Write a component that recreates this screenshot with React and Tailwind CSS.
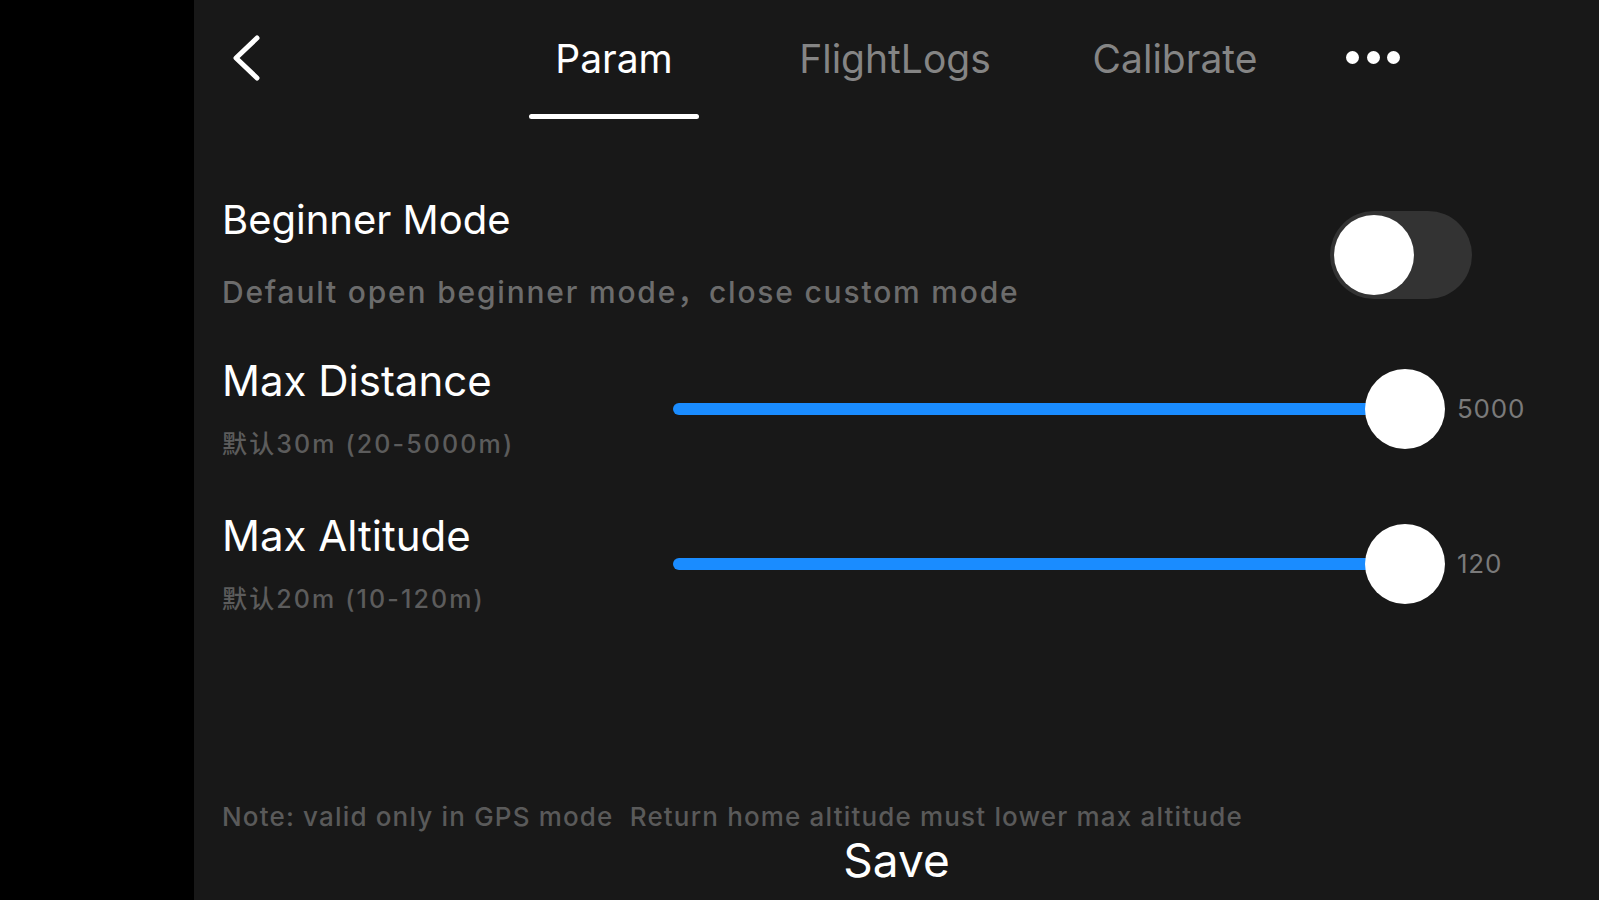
import React from "react";

function Slider({ value }) {
  return (
    <div className="flex items-center">
      <div className="relative h-[80px] w-[772px]">
        <div className="absolute left-0 top-[34px] h-[12px] w-[732px] rounded-full bg-[#1a8cff]" />
        <div className="absolute right-0 top-0 h-[80px] w-[80px] rounded-full bg-white" />
      </div>
      <div className="ml-[12px] text-[26px] leading-none tracking-[0.03em] text-[#7a7a7a]">{value}</div>
    </div>
  );
}

export default function App() {
  return (
    <div
      className="flex h-[900px] w-[1599px] overflow-hidden bg-black"
      style={{ fontFamily: '"Inter", "Noto Sans CJK SC", sans-serif' }}
    >
      <div className="w-[194px] shrink-0 bg-black" />
      <div className="flex flex-1 flex-col bg-[#181818]">
        {/* header */}
        <div className="flex h-[120px] items-start">
          <div className="ml-[36px] mt-[34px] w-[32px]">
            <svg width="32" height="48" viewBox="0 0 32 48" fill="none">
              <path d="M27 4 L6 24 L27 44" stroke="white" strokeWidth="5" strokeLinecap="round" strokeLinejoin="round" />
            </svg>
          </div>
          <div className="ml-[267px] flex items-start">
            <div className="flex w-[170px] flex-col items-center">
              <div className="mt-[36px] text-[39px] leading-[46px] text-white">Param</div>
              <div className="mt-[32px] h-[5px] w-[170px] rounded-full bg-white" />
            </div>
            <div className="ml-[111px] flex w-[170px] justify-center">
              <div className="mt-[36px] whitespace-nowrap text-[39px] leading-[46px] text-[#858585]">FlightLogs</div>
            </div>
            <div className="ml-[110px] flex w-[170px] justify-center">
              <div className="mt-[36px] whitespace-nowrap text-[39px] leading-[46px] text-[#858585]">Calibrate</div>
            </div>
            <div className="ml-[86px] mt-[51px] flex w-[54px] items-center justify-between">
              <div className="h-[13px] w-[13px] rounded-full bg-white" />
              <div className="h-[13px] w-[13px] rounded-full bg-white" />
              <div className="h-[13px] w-[13px] rounded-full bg-white" />
            </div>
          </div>
        </div>

        {/* beginner mode */}
        <div className="mt-[77px] flex items-center pl-[28px]">
          <div className="flex-1">
            <div className="text-[40px] leading-[46px] text-white">Beginner Mode</div>
            <div className="mt-[29px] whitespace-nowrap text-[30px] font-medium leading-[40px] tracking-[0.06em] text-[#6c6c6c]">
              Default open beginner mode，close custom mode
            </div>
          </div>
          <div className="mr-[127px] flex h-[88px] w-[142px] items-center rounded-full bg-[#333333] pl-[4px]">
            <div className="h-[80px] w-[80px] rounded-full bg-white" />
          </div>
        </div>

        {/* max distance */}
        <div className="mt-[44px] flex items-center pl-[28px]">
          <div className="w-[451px]">
            <div className="text-[42px] leading-[50px] text-white">Max Distance</div>
            <div className="mt-[21px] whitespace-nowrap text-[25px] font-medium leading-[34px] tracking-[0.085em] text-[#5c5c5c]">默认30m (20-5000m)</div>
          </div>
          <Slider value="5000" />
        </div>

        {/* max altitude */}
        <div className="mt-[50px] flex items-center pl-[28px]">
          <div className="w-[451px]">
            <div className="text-[42px] leading-[50px] text-white">Max Altitude</div>
            <div className="mt-[21px] whitespace-nowrap text-[25px] font-medium leading-[34px] tracking-[0.085em] text-[#5c5c5c]">默认20m (10-120m)</div>
          </div>
          <Slider value="120" />
        </div>

        {/* note */}
        <div className="mt-[186px] whitespace-nowrap pl-[28px] text-[26px] font-medium leading-[30px] tracking-[0.045em] text-[#5a5a5a]">
          Note: valid only in GPS mode&nbsp;&nbsp;Return home altitude must lower max altitude
        </div>
        <div className="mt-[3px] text-center text-[46px] leading-[50px] text-white">Save</div>
      </div>
    </div>
  );
}
